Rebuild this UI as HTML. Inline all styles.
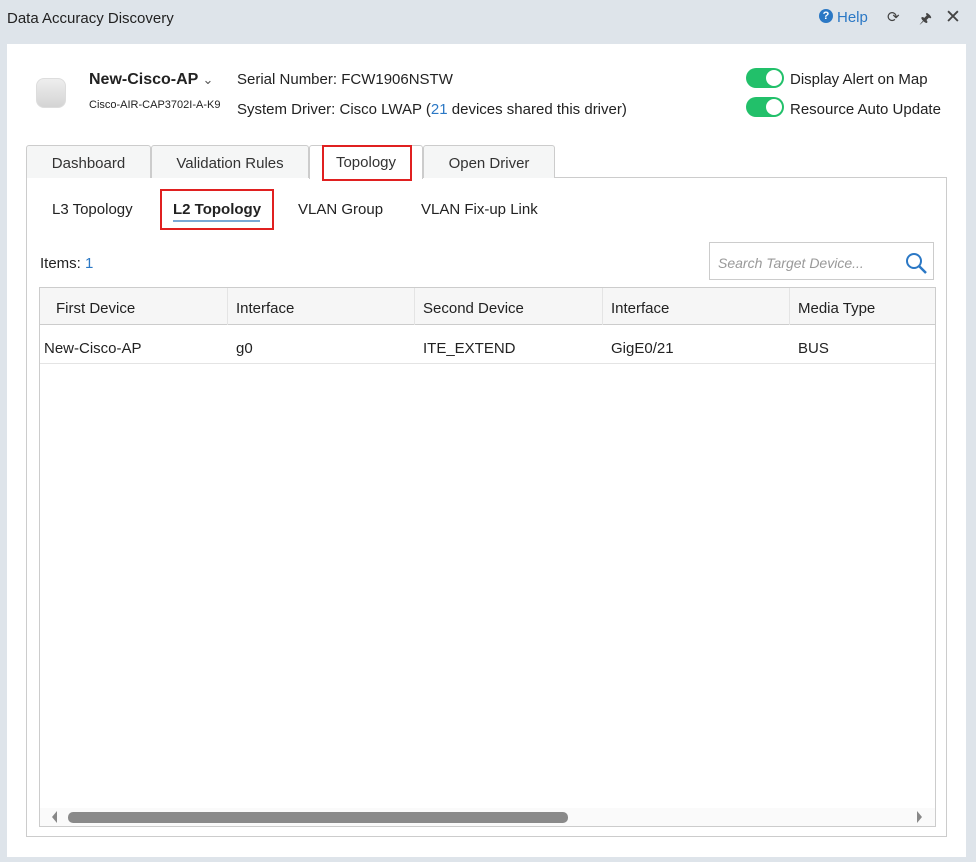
<!DOCTYPE html>
<html><head><style>
*{box-sizing:border-box;margin:0;padding:0}
body{width:976px;height:862px;background:#dee4ea;font-family:"Liberation Sans",sans-serif;color:#222;position:relative;overflow:hidden;font-size:14px}
.a{position:absolute;white-space:nowrap}
.t{margin-top:2px}
.panel{position:absolute;left:7px;top:44px;width:959px;height:813px;background:#fff}
.tog{position:absolute;width:38px;height:20px;border-radius:10px;background:#22c06a}
.tog:after{content:"";position:absolute;right:2px;top:2px;width:16px;height:16px;border-radius:50%;background:#fff}
.tab{position:absolute;top:145px;height:33px;border:1px solid #ccc;border-bottom:none;background:#f5f6f6;border-radius:3px 3px 0 0;font-size:15px;color:#333;text-align:center;line-height:36px}
</style></head><body>
<div class="a t" style="left:7px;top:8px;font-size:15px;color:#222">Data Accuracy Discovery</div>
<div class="a" style="left:819px;top:9px;width:14px;height:14px;border-radius:50%;background:#2b78c5;color:#fff;font-size:11px;font-weight:bold;text-align:center;line-height:14px">?</div>
<div class="a" style="left:837px;top:9px;font-size:15px;color:#2b78c5">Help</div>
<div class="a" style="left:887px;top:8px;font-size:15px;color:#444">⟳</div>
<div class="a" style="left:919px;top:8px;font-size:14px;color:#444">🖈</div>
<div class="a" style="left:945px;top:6px;font-size:19px;color:#444">✕</div>
<div class="panel"></div>
<div class="a" style="left:36px;top:78px;width:30px;height:30px;border-radius:8px;background:linear-gradient(#eee,#d4d4d4);border:1px solid #ddd"></div>
<div class="a t" style="left:89px;top:69px;font-size:16px;font-weight:bold">New-Cisco-AP <span style="font-weight:normal;font-size:13px;color:#555">⌄</span></div>
<div class="a t" style="left:89px;top:97px;font-size:11px">Cisco-AIR-CAP3702I-A-K9</div>
<div class="a t" style="left:237px;top:69px;font-size:15px">Serial Number: FCW1906NSTW</div>
<div class="a t" style="left:237px;top:99px;font-size:15px">System Driver: Cisco LWAP (<span style="color:#2b78c5">21</span> devices shared this driver)</div>
<div class="tog" style="left:746px;top:68px"></div>
<div class="a t" style="left:790px;top:69px;font-size:15px">Display Alert on Map</div>
<div class="tog" style="left:746px;top:97px"></div>
<div class="a t" style="left:790px;top:99px;font-size:15px">Resource Auto Update</div>
<div class="a" style="left:26px;top:177px;width:921px;height:660px;border:1px solid #ccc"></div>
<div class="tab" style="left:26px;width:125px">Dashboard</div>
<div class="tab" style="left:151px;width:158px">Validation Rules</div>
<div class="tab" style="left:309px;width:114px;background:#fff;height:34px;line-height:33px">Topology</div>
<div class="a" style="left:322px;top:145px;width:90px;height:36px;border:2px solid #e02020"></div>
<div class="tab" style="left:423px;width:132px">Open Driver</div>
<div class="a t" style="left:52px;top:199px;font-size:15px">L3 Topology</div>
<div class="a t" style="left:173px;top:199px;font-size:15px;font-weight:bold">L2 Topology</div>
<div class="a" style="left:173px;top:220px;width:87px;height:2px;background:#7aa9d6"></div>
<div class="a" style="left:160px;top:189px;width:114px;height:41px;border:2px solid #e02020"></div>
<div class="a t" style="left:298px;top:199px;font-size:15px">VLAN Group</div>
<div class="a t" style="left:421px;top:199px;font-size:15px">VLAN Fix-up Link</div>
<div class="a t" style="left:40px;top:253px;font-size:15px">Items: <span style="color:#2b78c5">1</span></div>
<div class="a" style="left:709px;top:242px;width:225px;height:38px;border:1px solid #ccc"></div>
<div class="a t" style="left:718px;top:253px;font-size:14px;font-style:italic;color:#999">Search Target Device...</div>
<svg class="a" style="left:904px;top:251px" width="24" height="24"><circle cx="10" cy="10" r="7" fill="none" stroke="#2b78c5" stroke-width="2"/><line x1="15" y1="15" x2="22" y2="22" stroke="#2b78c5" stroke-width="2.5"/></svg>
<div class="a" style="left:39px;top:287px;width:897px;height:540px;border:1px solid #ccc"></div>
<div class="a" style="left:40px;top:288px;width:895px;height:37px;background:#f6f6f6;border-bottom:1px solid #ccc"></div>
<div class="a" style="left:227px;top:288px;width:1px;height:37px;background:#e4e4e4"></div>
<div class="a" style="left:414px;top:288px;width:1px;height:37px;background:#e4e4e4"></div>
<div class="a" style="left:602px;top:288px;width:1px;height:37px;background:#e4e4e4"></div>
<div class="a" style="left:789px;top:288px;width:1px;height:37px;background:#e4e4e4"></div>
<div class="a t" style="left:56px;top:298px;font-size:15px">First Device</div>
<div class="a t" style="left:236px;top:298px;font-size:15px">Interface</div>
<div class="a t" style="left:423px;top:298px;font-size:15px">Second Device</div>
<div class="a t" style="left:611px;top:298px;font-size:15px">Interface</div>
<div class="a t" style="left:798px;top:298px;font-size:15px">Media Type</div>
<div class="a t" style="left:44px;top:338px;font-size:15px">New-Cisco-AP</div>
<div class="a t" style="left:236px;top:338px;font-size:15px">g0</div>
<div class="a t" style="left:423px;top:338px;font-size:15px">ITE_EXTEND</div>
<div class="a t" style="left:611px;top:338px;font-size:15px">GigE0/21</div>
<div class="a t" style="left:798px;top:338px;font-size:15px">BUS</div>
<div class="a" style="left:40px;top:363px;width:895px;height:1px;background:#e4e4e4"></div>
<div class="a" style="left:40px;top:808px;width:895px;height:18px;background:#fafafa"></div>
<div class="a" style="left:68px;top:812px;width:500px;height:11px;border-radius:5px;background:#8a8a8a"></div>
<div class="a" style="left:52px;top:811px;width:0;height:0;border-top:6px solid transparent;border-bottom:6px solid transparent;border-right:5px solid #888"></div>
<div class="a" style="left:917px;top:811px;width:0;height:0;border-top:6px solid transparent;border-bottom:6px solid transparent;border-left:5px solid #888"></div>
</body></html>
